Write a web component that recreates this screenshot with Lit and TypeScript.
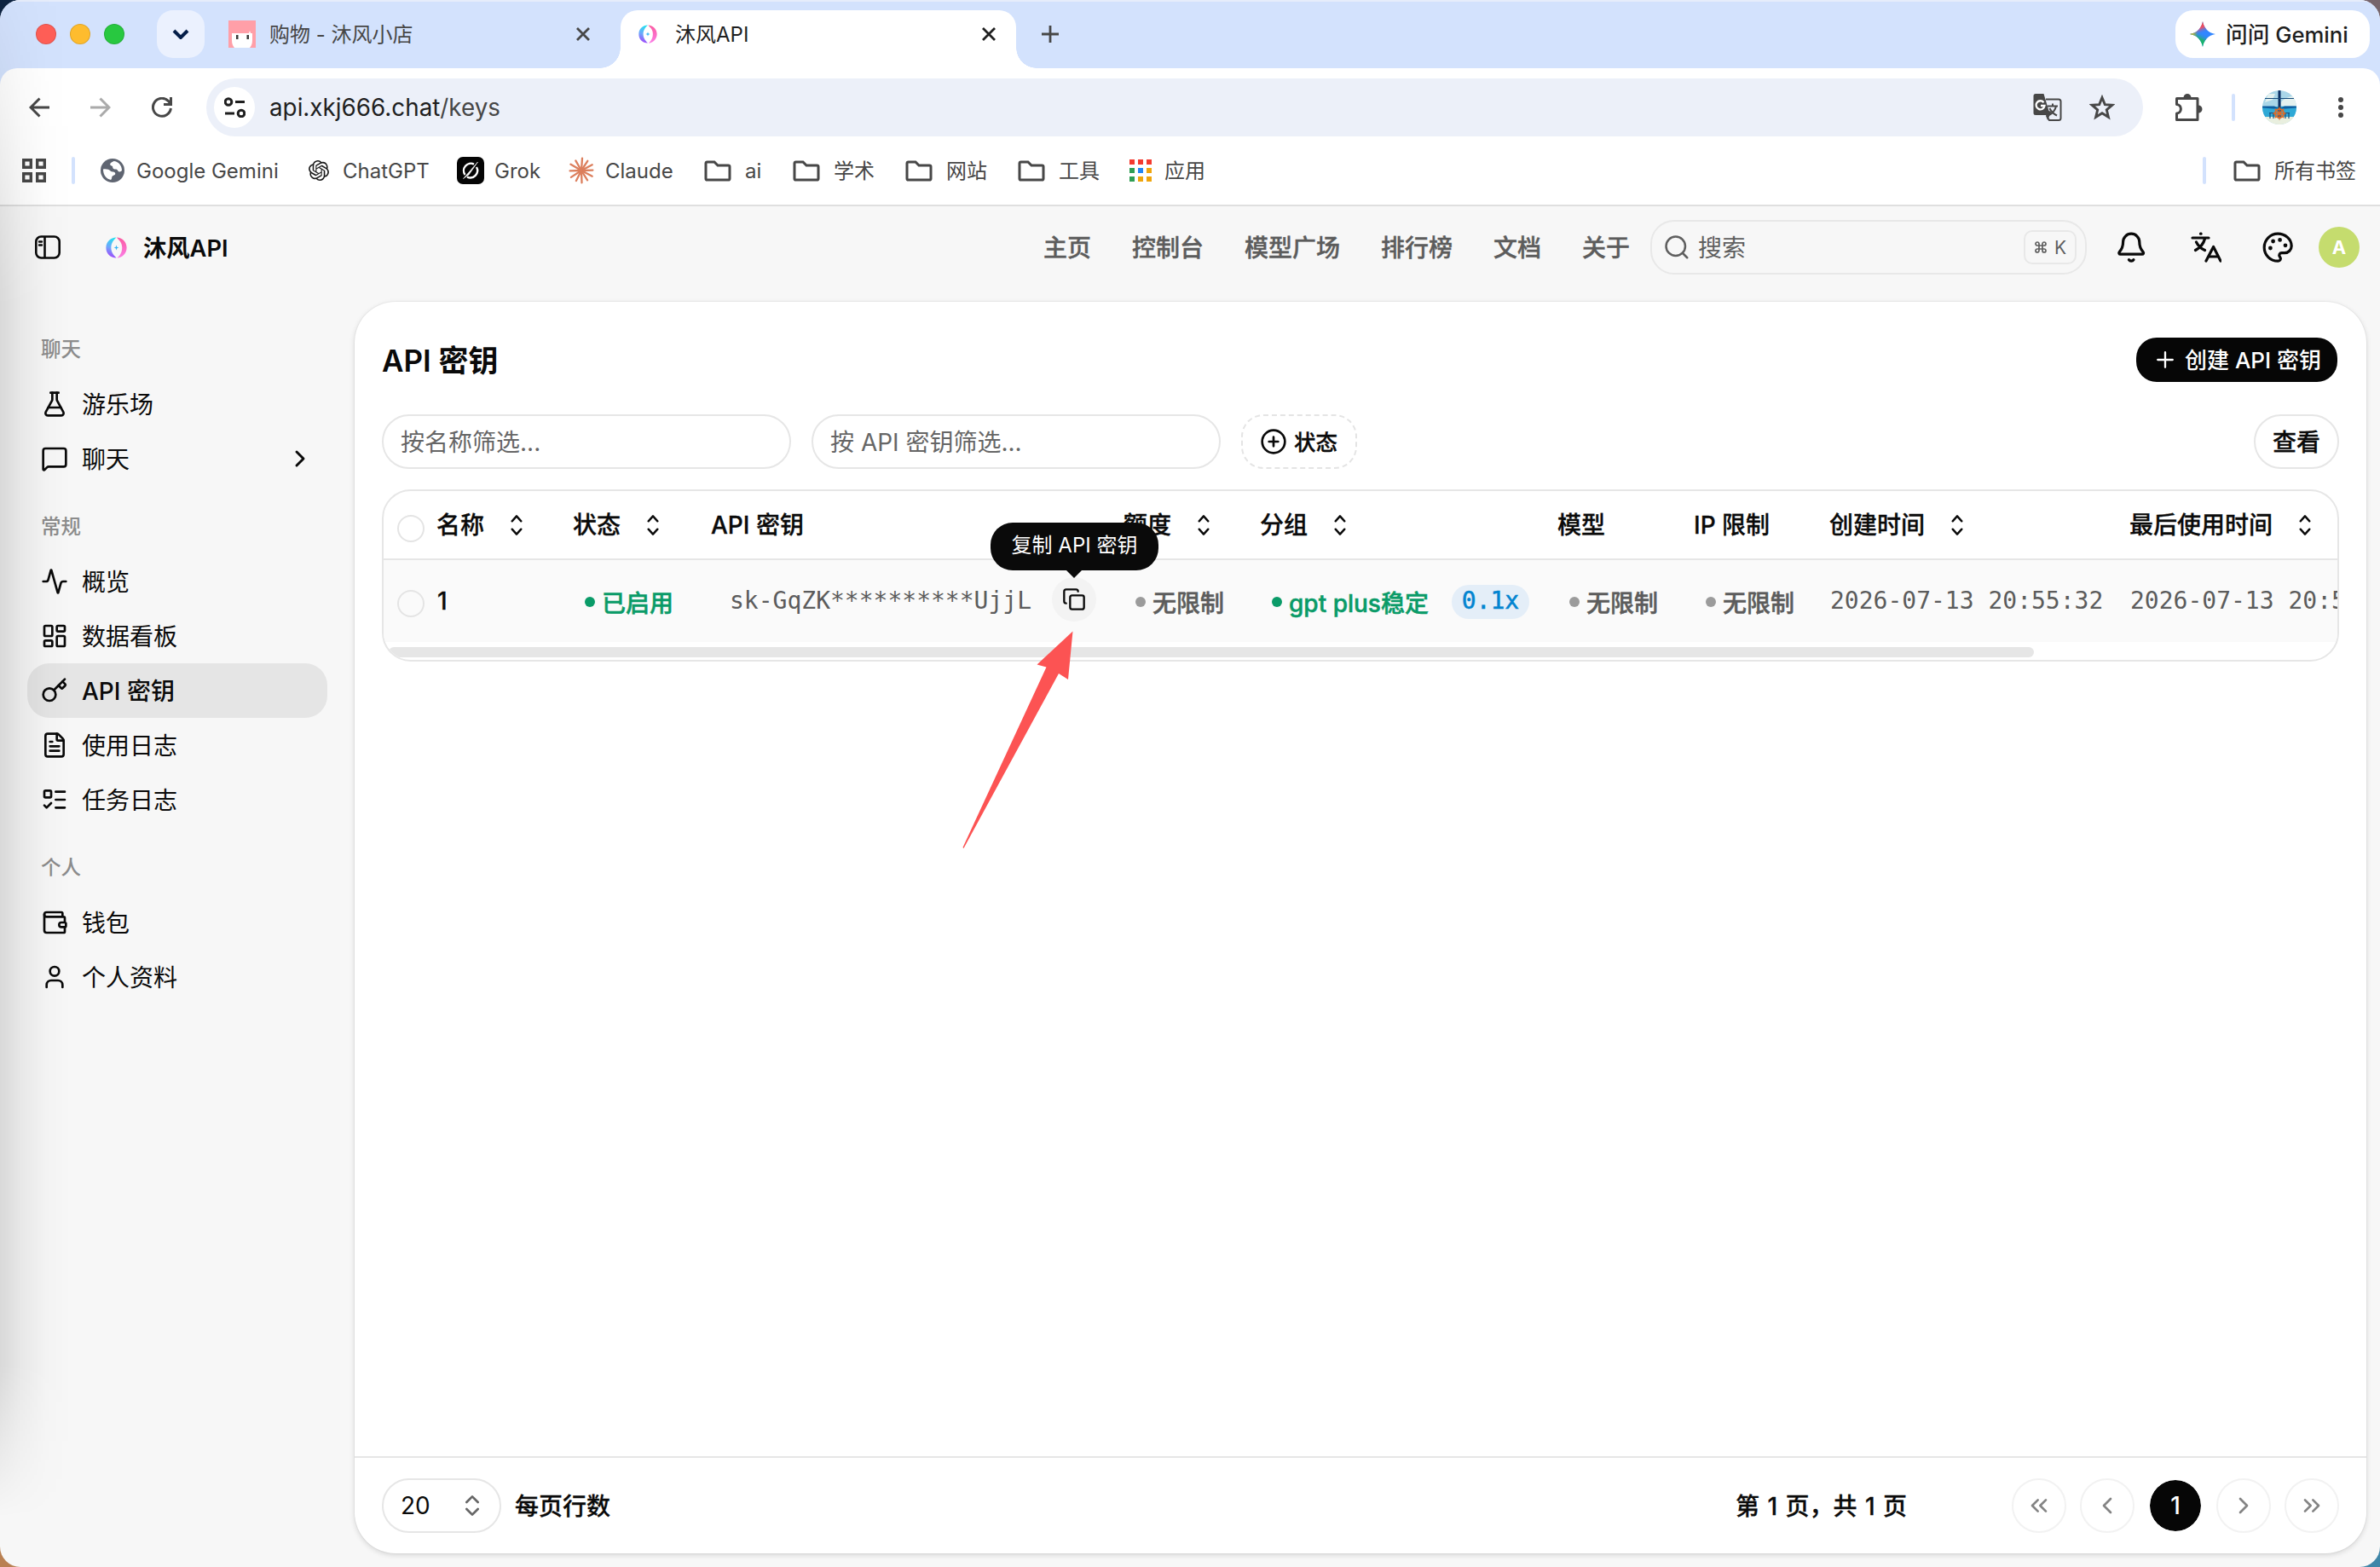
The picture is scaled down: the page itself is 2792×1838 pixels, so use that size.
import { LitElement, html, svg, css } from "lit";
import { customElement } from "lit/decorators.js";
import { classMap } from "lit/directives/class-map.js";
import { styleMap } from "lit/directives/style-map.js";

type Glyph = ReturnType<typeof svg>;

const icon = (size: number, body: Glyph, stroke = 2, cls = "") => html`<svg class="icon ${cls}" width=${size} height=${size} viewBox="0 0 24 24" fill="none" stroke="currentColor" stroke-width=${stroke} stroke-linecap="round" stroke-linejoin="round">${body}</svg>`;

const art = (w: number, h: number, body: Glyph) => html`<svg class="icon" width=${w} height=${h} viewBox="0 0 ${w} ${h}" fill="none">${body}</svg>`;

const G = {
  flask: svg`<path d="M14 2v6a2 2 0 0 0 .245.96l5.51 10.08A2 2 0 0 1 18 22H6a2 2 0 0 1-1.755-2.96l5.51-10.08A2 2 0 0 0 10 8V2"/><path d="M6.453 15h11.094"/><path d="M8.5 2h7"/>`,
  message: svg`<path d="M22 17a2 2 0 0 1-2 2H6.828a2 2 0 0 0-1.414.586l-2.202 2.202A.71.71 0 0 1 2 21.286V5a2 2 0 0 1 2-2h16a2 2 0 0 1 2 2z"/>`,
  activity: svg`<path d="M22 12h-2.48a2 2 0 0 0-1.93 1.46l-2.35 8.36a.25.25 0 0 1-.48 0L9.24 2.18a.25.25 0 0 0-.48 0l-2.35 8.36A2 2 0 0 1 4.49 12H2"/>`,
  dashboard: svg`<rect x="3" y="3" width="7" height="9" rx="1"/><rect x="14" y="3" width="7" height="5" rx="1"/><rect x="14" y="12" width="7" height="9" rx="1"/><rect x="3" y="16" width="7" height="5" rx="1"/>`,
  key: svg`<path d="m15.5 7.5 2.3 2.3a1 1 0 0 0 1.4 0l2.1-2.1a1 1 0 0 0 0-1.4L19 4"/><path d="m21 2-9.6 9.6"/><circle cx="7.5" cy="15.5" r="5.5"/>`,
  file: svg`<path d="M6 22a2 2 0 0 1-2-2V4a2 2 0 0 1 2-2h8a2.4 2.4 0 0 1 1.704.706l3.588 3.588A2.4 2.4 0 0 1 20 8v12a2 2 0 0 1-2 2z"/><path d="M14 2v5a1 1 0 0 0 1 1h5"/><path d="M10 9H8M16 13H8M16 17H8"/>`,
  todo: svg`<path d="M13 5h8M13 12h8M13 19h8"/><path d="m3 17 2 2 4-4"/><rect x="3" y="4" width="6" height="6" rx="1"/>`,
  wallet: svg`<path d="M19 7V4a1 1 0 0 0-1-1H5a2 2 0 0 0 0 4h15a1 1 0 0 1 1 1v4h-3a2 2 0 0 0 0 4h3a1 1 0 0 0 1-1v-2a1 1 0 0 0-1-1"/><path d="M3 5v14a2 2 0 0 0 2 2h15a1 1 0 0 0 1-1v-4"/>`,
  user: svg`<circle cx="12" cy="7" r="4"/><path d="M19 21v-2a4 4 0 0 0-4-4H9a4 4 0 0 0-4 4v2"/>`,
  bell: svg`<path d="M10.268 21a2 2 0 0 0 3.464 0"/><path d="M3.262 15.326A1 1 0 0 0 4 17h16a1 1 0 0 0 .74-1.673C19.41 13.956 18 12.499 18 8A6 6 0 0 0 6 8c0 4.499-1.411 5.956-2.738 7.326"/>`,
  palette: svg`<path d="M12 22a1 1 0 0 1 0-20 10 9 0 0 1 10 9 5 5 0 0 1-5 5h-2.25a1.75 1.75 0 0 0-1.4 2.8l.3.4a1.75 1.75 0 0 1-1.4 2.8z"/><g fill="currentColor" stroke-width="1.6"><circle cx="13.5" cy="6.5" r=".7"/><circle cx="17.5" cy="10.5" r=".7"/><circle cx="6.5" cy="12.5" r=".7"/><circle cx="8.5" cy="7.5" r=".7"/></g>`,
  search: svg`<circle cx="11" cy="11" r="9"/><path d="m21.8 21.8-4.2-4.2"/>`,
  right: svg`<path d="m9 18 6-6-6-6"/>`,
  left: svg`<path d="m15 18-6-6 6-6"/>`,
  first: svg`<path d="m11 17-5-5 5-5"/><path d="m18 17-5-5 5-5"/>`,
  last: svg`<path d="m6 17 5-5-5-5"/><path d="m13 17 5-5-5-5"/>`,
  updown: svg`<path d="m7 15 5 5 5-5"/><path d="m7 9 5-5 5 5"/>`,
  copy: svg`<rect x="8" y="8" width="14" height="14" rx="2"/><path d="M4 16c-1.1 0-2-.9-2-2V4c0-1.1.9-2 2-2h10c1.1 0 2 .9 2 2"/>`,
  pluscircle: svg`<circle cx="12" cy="12" r="10"/><path d="M8 12h8M12 8v8"/>`,
  plus: svg`<path d="M4.500 12h15M12 4.500v15"/>`,
};

const folder = art(32, 26, svg`<path d="M2 4.5A1.6 1.6 0 0 1 3.6 3H12l4 4h12.4A1.6 1.6 0 0 1 30 8.6v13.8a1.6 1.6 0 0 1-1.6 1.6H3.6A1.6 1.6 0 0 1 2 22.4z" stroke="#474747" stroke-width="3"/>`);

const brand = (s: number, id: string) => html`<svg class="icon" width=${s} height=${s} viewBox="0 0 26 26"><defs><linearGradient id="${id}a" x1="0.5" y1="0" x2="0.3" y2="1"><stop offset="0" stop-color="#27dff0"/><stop offset=".5" stop-color="#6fa6fb"/><stop offset="1" stop-color="#a63cfb"/></linearGradient><linearGradient id="${id}b" x1="0" y1="0" x2="0" y2="1"><stop offset="0" stop-color="#fb5ba0"/><stop offset="1" stop-color="#fb7ee6"/></linearGradient></defs><path fill="url(#${id}a)" d="M13 .6C6 .6.4 6 .4 13S5.500 25.400 13 25.400c-2-2-6.400-6-6.400-12.400S11 2.500 13 .6Z"/><path fill="url(#${id}b)" d="M13.400.6C20 .6 25.600 6 25.600 13S20 25.400 14 25.400c3-2.400 6-6.400 6-12.400S17 4.600 13.400.6Z"/><path fill="#39b6f5" d="m13 10 .8 2.200 2.200.8-2.200.8L13 16l-.8-2.200L10 13l2.200-.8z"/></svg>`;

const marks = {
  globe: art(28, 28, svg`<circle cx="14" cy="14" r="14" fill="#5f6571"/><path d="M3 12.500c3.500-.5 7 .2 8.600 2 1.600 1.700 5 .4 5.600 2.700.5 2-2 2.300-3.300 3.300-1.200 1-.3 3.500-1.900 4.400C6.500 24 3 19 3 12.500Z" fill="#fff"/><path d="M15.500 3c-1.200 1-4.500 1.700-4.300 4 .3 2 3.300 1 3 3.200-.2 1.700 1.800 2.300 3.500 2.300 2.600 0 2.300 2.700 4.300 3 1.200.1 2.200-.4 3-1.400C25 8 20.500 3.300 15.500 3Z" fill="#fff"/>`),
  openai: art(24, 24, svg`<path fill="#1a1a1a" d="M22.2819 9.8211a5.9847 5.9847 0 0 0-.5157-4.9108 6.0462 6.0462 0 0 0-6.5098-2.9A6.0651 6.0651 0 0 0 4.9807 4.1818a5.9847 5.9847 0 0 0-3.9977 2.9 6.0462 6.0462 0 0 0 .7427 7.0966 5.98 5.98 0 0 0 .511 4.9107 6.051 6.051 0 0 0 6.5146 2.9001A5.9847 5.9847 0 0 0 13.2599 24a6.0557 6.0557 0 0 0 5.7718-4.2058 5.9894 5.9894 0 0 0 3.9977-2.9001 6.0557 6.0557 0 0 0-.7475-7.0729zm-9.022 12.6081a4.4755 4.4755 0 0 1-2.8764-1.0408l.1419-.0804 4.7783-2.7582a.7948.7948 0 0 0 .3927-.6813v-6.7369l2.02 1.1686a.071.071 0 0 1 .038.052v5.5826a4.504 4.504 0 0 1-4.4945 4.4944zm-9.6607-4.1254a4.4708 4.4708 0 0 1-.5346-3.0137l.142.0852 4.783 2.7582a.7712.7712 0 0 0 .7806 0l5.8428-3.3685v2.3324a.0804.0804 0 0 1-.0332.0615L9.74 19.9502a4.4992 4.4992 0 0 1-6.1408-1.6464zM2.3408 7.8956a4.485 4.485 0 0 1 2.3655-1.9728V11.6a.7664.7664 0 0 0 .3879.6765l5.8144 3.3543-2.0201 1.1685a.0757.0757 0 0 1-.071 0l-4.8303-2.7865A4.504 4.504 0 0 1 2.3408 7.872zm16.5963 3.8558L13.1038 8.364 15.1192 7.2a.0757.0757 0 0 1 .071 0l4.8303 2.7913a4.4944 4.4944 0 0 1-.6765 8.1042v-5.6772a.79.79 0 0 0-.407-.667zm2.0107-3.0231l-.142-.0852-4.7735-2.7818a.7759.7759 0 0 0-.7854 0L9.409 9.2297V6.8974a.0662.0662 0 0 1 .0284-.0615l4.8303-2.7866a4.4992 4.4992 0 0 1 6.6802 4.66zM8.3065 12.863l-2.02-1.1638a.0804.0804 0 0 1-.038-.0567V6.0742a4.4992 4.4992 0 0 1 7.3757-3.4537l-.142.0805L8.704 5.459a.7948.7948 0 0 0-.3927.6813zm1.0976-2.3654l2.602-1.4998 2.6069 1.4998v2.9994l-2.5974 1.4997-2.6067-1.4997Z"/>`),
  grok: art(32, 32, svg`<rect width="32" height="32" rx="7" fill="#050505"/><path d="M20 8.600A8.400 8.400 0 0 0 9.500 21M12 23.600A8.400 8.400 0 0 0 23 12" stroke="#fff" stroke-width="2.400"/><path d="m7.500 25.500 17-19.500-10.500 15z" fill="#fff" stroke="#fff" stroke-width=".6"/>`),
  claude: art(32, 32, svg`<g stroke="#dc7f5d" stroke-width="2.300" stroke-linecap="round">${[4, 33, 62, 88, 118, 148, 178, 207, 237, 268, 300, 330].map((a, i) => svg`<path transform="rotate(${a} 16 16)" d="M16 16V${i % 2 ? 2.600 : 1.600}"/>`)}</g>`),
  folder,
  apps: art(28, 28, svg`${["#f43a2f", "#f43a2f", "#f43a2f", "#2f9e54", "#2286f5", "#f0a50c", "#2f9e54", "#f0a50c", "#f0a50c"].map((c, i) => svg`<rect x=${1 + (i % 3) * 10} y=${1 + Math.floor(i / 3) * 10} width="6" height="6" fill=${c}/>`)}`),
};

interface Mark { icon: keyof typeof marks; label: string; w: number; lead: number; gap: number; cjk?: boolean; }
const bookmarks: Mark[] = [
  { icon: "globe", label: "Google Gemini", w: 166, lead: 30, gap: 14 },
  { icon: "openai", label: "ChatGPT", w: 101, lead: 36, gap: 16 },
  { icon: "grok", label: "Grok", w: 54, lead: 33, gap: 12 },
  { icon: "claude", label: "Claude", w: 80, lead: 32, gap: 12 },
  { icon: "folder", label: "ai", w: 20, lead: 36, gap: 16 },
  { icon: "folder", label: "学术", w: 48, lead: 36, gap: 16, cjk: true },
  { icon: "folder", label: "网站", w: 48, lead: 36, gap: 16, cjk: true },
  { icon: "folder", label: "工具", w: 48, lead: 36, gap: 16, cjk: true },
  { icon: "apps", label: "应用", w: 48, lead: 34, gap: 14, cjk: true },
];

const groups: { label: string; items: { icon: Glyph; label: string; active?: boolean; more?: boolean }[] }[] = [
  { label: "聊天", items: [{ icon: G.flask, label: "游乐场" }, { icon: G.message, label: "聊天", more: true }] },
  {
    label: "常规",
    items: [
      { icon: G.activity, label: "概览" },
      { icon: G.dashboard, label: "数据看板" },
      { icon: G.key, label: "API 密钥", active: true },
      { icon: G.file, label: "使用日志" },
      { icon: G.todo, label: "任务日志" },
    ],
  },
  { label: "个人", items: [{ icon: G.wallet, label: "钱包" }, { icon: G.user, label: "个人资料" }] },
];

const columns: { label: string; sort?: boolean }[] = [
  { label: "名称", sort: true },
  { label: "状态", sort: true },
  { label: "API 密钥" },
  { label: "额度", sort: true },
  { label: "分组", sort: true },
  { label: "模型" },
  { label: "IP 限制" },
  { label: "创建时间", sort: true },
  { label: "最后使用时间", sort: true },
];

const base = css`
  * { box-sizing: border-box; }
  :host { display: block; font-family: Inter, "Noto Sans CJK SC", sans-serif; color: #0a0a0a; white-space: nowrap; }
  .icon { display: block; flex: none; }
  .cjk { padding-bottom: 3px; }
`;

@customElement("browser-chrome")
export class BrowserChrome extends LitElement {
  static styles = [base, css`
    :host { font-size: 24px; color: #474747; }
    .strip { display: flex; align-items: center; height: 80px; background: #d3e2fd; border-top: 2px solid #e6edfb; padding: 0 12px 2px 42px; }
    .lights { display: flex; gap: 16px; width: 142px; }
    .light { width: 24px; height: 24px; border-radius: 50%; border: 1px solid rgb(0 0 0 / 12%); }
    .red { background: #ff5f57; } .amber { background: #febc2e; } .green { background: #28c840; }
    .search { display: grid; place-items: center; width: 56px; height: 56px; border-radius: 19px; background: #ebf1fe; }
    .tab { display: flex; align-items: center; gap: 16px; width: 488px; height: 56px; padding: 0 35px 0 28px; }
    .grow { flex: 1; }
    .active { position: relative; align-self: flex-end; width: 464px; height: 68px; margin-bottom: -2px; padding: 0 23px 12px 21px; gap: 21px; background: #fff; border-radius: 20px 20px 0 0; color: #1f1f1f; }
    .active::before, .active::after { content: ""; position: absolute; bottom: 0; width: 24px; height: 24px; }
    .active::before { left: -24px; background: radial-gradient(circle at 0 0, transparent 23.500px, #fff 24px); }
    .active::after { right: -24px; background: radial-gradient(circle at 100% 0, transparent 23.500px, #fff 24px); }
    .new { margin-left: 30px; }
    .gemini { display: flex; align-items: center; gap: 12px; height: 56px; width: 228px; padding-left: 17px; border-radius: 21px; background: #fff; color: #1f1f1f; font-size: 25.700px; font-weight: 500; }
    .under { background: #d3e2fd; }
    .bars { background: #fff; border-radius: 20px 20px 0 0; }
    .toolbar { display: flex; align-items: center; height: 92px; padding: 0 33px 0 34px; }
    .back { width: 72px; } .fwd { width: 72px; } .reload { width: 64px; }
    .address { display: flex; align-items: center; width: 2272px; height: 68px; border-radius: 34px; background: #ecf0f9; padding: 0 33px 0 9px; color: #1f1f1f; font-size: 27.800px; }
    .site { display: grid; place-items: center; width: 48px; height: 48px; border-radius: 50%; background: #fff; margin-right: 17px; }
    .path { color: #474747; }
    .star { margin-left: 32px; }
    .puzzle { margin-left: 38px; }
    .rule { width: 4px; height: 32px; border-radius: 2px; background: #d3e2fd; }
    .toolbar .rule { margin-left: 34px; margin-right: 32px; }
    .dots { margin-left: 49px; }
    .marks { display: flex; align-items: center; height: 68px; padding: 0 28px 12px 26px; }
    .marks .rule { margin-left: 30px; }
    .mark { display: flex; align-items: center; }
    .hr { height: 2px; background: #dfdfdf; }
    .all { gap: 16px; margin-left: 32px; }
  `];
  render() {
    const x = (c: string) => art(18, 18, svg`<path d="m2 2 14 14M16 2 2 16" stroke=${c} stroke-width="2.800"/>`);
    const star = "M15 0c1.500 8 6.500 13.500 15 15-8.500 1.500-13.500 7-15 15C13.500 22 8.500 16.500 0 15 8.500 13.500 13.500 8 15 0Z";
    return html`
      <div class="strip">
        <div class="lights"><span class="light red"></span><span class="light amber"></span><span class="light green"></span></div>
        <div class="search">${art(20, 12, svg`<path d="m2 2 8 8 8-8" stroke="#041e49" stroke-width="4"/>`)}</div>
        <div class="tab">
          ${art(32, 32, svg`<rect width="32" height="32" fill="#ff9fa8"/><path d="M4 15h20l1-3 1 3h2v8q0 6-3 9H7q-3-3-3-9z" fill="#fff"/><path d="M9 17h2.500v5H9zM21.500 17H24v5h-2.500z" fill="#3a3a3a"/>`)}
          <span class="cjk">购物 - 沐风小店</span><span class="grow"></span>${x("#474747")}
        </div>
        <div class="tab active">${brand(22, "t")}<span class="cjk">沐风API</span><span class="grow"></span>${x("#1f1f1f")}</div>
        <div class="new">${art(20, 20, svg`<path d="M10 0v20M0 10h20" stroke="#474747" stroke-width="2.800"/>`)}</div>
        <span class="grow"></span>
        <div class="gemini">
          <svg class="icon" width="30" height="30" viewBox="0 0 30 30"><defs>
            <linearGradient id="g1" gradientUnits="userSpaceOnUse" x1="0" y1="15" x2="9" y2="15"><stop offset="0" stop-color="#ffc400"/><stop offset="1" stop-color="#fbbc04" stop-opacity="0"/></linearGradient>
            <linearGradient id="g2" gradientUnits="userSpaceOnUse" x1="13" y1="0" x2="18" y2="13"><stop offset="0" stop-color="#ff3f35"/><stop offset=".5" stop-color="#ec5066"/><stop offset="1" stop-color="#3186ff" stop-opacity="0"/></linearGradient>
            <linearGradient id="g3" gradientUnits="userSpaceOnUse" x1="12" y1="28" x2="18" y2="15"><stop offset="0" stop-color="#0ebc5f"/><stop offset=".45" stop-color="#20b070"/><stop offset="1" stop-color="#3186ff" stop-opacity="0"/></linearGradient>
          </defs><path fill="#3186ff" d=${star}/>${["g2", "g3", "g1"].map((g) => svg`<path fill="url(#${g})" d=${star}/>`)}</svg>
          <span class="cjk">问问 Gemini</span>
        </div>
      </div>
      <div class="under"><div class="bars">
        <div class="toolbar">
          <div class="back">${art(24, 24, svg`<path d="M24 12H3M12.500 1.500 2 12l10.500 10.500" stroke="#474747" stroke-width="3"/>`)}</div>
          <div class="fwd">${art(24, 24, svg`<path d="M0 12h21M11.500 1.500 22 12 11.500 22.500" stroke="#aaa" stroke-width="3"/>`)}</div>
          <div class="reload">${art(24, 24, svg`<path d="M22.400 13A10.500 10.500 0 1 1 19.600 4.600L22 7.500M22.500 0v8.500H14" stroke="#474747" stroke-width="3"/>`)}</div>
          <div class="address">
            <span class="site">${art(25, 24, svg`<g stroke="#1f1f1f" stroke-width="3"><circle cx="5" cy="5.500" r="3.800"/><path d="M13 5.500h11M1 19h11"/><circle cx="20" cy="19" r="3.800"/></g>`)}</span>
            <span>api.xkj666.chat<span class="path">/keys</span></span><span class="grow"></span>
            ${art(34, 34, svg`<path d="M15 7.500h15A2.500 2.500 0 0 1 32.500 10v19.500A2.500 2.500 0 0 1 30 32H19l-3-5" stroke="#474747" stroke-width="2"/><path d="M3 1h9.500l6 20 3 1-4.500 10-2-6H3a2.500 2.500 0 0 1-2.500-2.500v-20A2.500 2.500 0 0 1 3 1Z" fill="#474747"/><path d="M12.500 11.200A5 5 0 1 0 13.500 15H9" stroke="#fff" stroke-width="2.300"/><path d="M17 15.500h12M23 12.500v3M27 15.500c-.8 4-4 8-8 10.500M19.500 18c1.500 3.500 4.500 6.500 8.500 8.500" stroke="#474747" stroke-width="2"/>`)}
            <span class="star">${art(30, 30, svg`<path d="m15 3.500 3.300 8.100 8.700.6-6.700 5.600 2.100 8.500L15 21.700l-7.400 4.600 2.100-8.500L3 12.200l8.700-.6z" stroke="#474747" stroke-width="2.900"/>`)}</span>
          </div>
          <span class="puzzle">${art(32, 32, svg`<path d="M1.500 5.500h24.500v25H1.500v-7.500c6.500-.5 6.500-10 0-10.500z" stroke="#474747" stroke-width="3" stroke-linejoin="round"/><path d="M9.500 4.500a4.500 4.500 0 0 1 9 0zM27 13.500a4.500 4.500 0 0 1 0 9z" fill="#474747"/>`)}</span>
          <span class="rule"></span>
          <svg class="icon" width="40" height="40" viewBox="0 0 40 40"><defs><clipPath id="av"><circle cx="20" cy="20" r="20"/></clipPath></defs><g clip-path="url(#av)"><path fill="#a9d6e8" d="M0 0h40v40H0z"/><path fill="#e4f1ef" d="M7 4h8l-3 7-9 3zM22 14c3-5 10-6 18-9v13H22z"/><path fill="#2fa9d6" d="M0 19h40v12H0z"/><path fill="#0c5ea0" d="M0 18.500h14l6 3 6-3h14v2l-13 1H13L0 20.500z"/><path fill="#e9efdf" d="M0 31h40v9H0z"/><path stroke="#0a2f63" stroke-width="3" d="M20 0v33"/><path stroke="#164c7c" stroke-width="1.200" d="M3 9.500h34M9 26v7M13 27v6M27 27v6M31 26v7M8 26.500h7M26 26.500h6"/><circle cx="20" cy="27" r="5.200" fill="none" stroke="#df6c28" stroke-width="1.800"/><path stroke="#df6c28" stroke-width="1.300" d="M20 19.500v15M12.500 27h15M14.700 21.700l10.600 10.600M25.300 21.700 14.700 32.300"/></g></svg>
          <span class="dots">${art(6, 24, svg`<g fill="#474747"><circle cx="3" cy="3" r="3"/><circle cx="3" cy="12" r="3"/><circle cx="3" cy="21" r="3"/></g>`)}</span>
        </div>
        <div class="marks">
          ${art(28, 28, svg`<g stroke="#474747" stroke-width="3.400"><path d="M1.700 1.700h8.600v8.600H1.700zM17.700 1.700h8.600v8.600h-8.600zM1.700 17.700h8.600v8.600H1.700zM17.700 17.700h8.600v8.600h-8.600z"/></g>`)}
          <span class="rule"></span>
          ${bookmarks.map((b) => html`<div class="mark" style=${styleMap({ marginLeft: `${b.lead}px`, gap: `${b.gap}px` })}>${marks[b.icon]}<span class=${classMap({ cjk: !!b.cjk })} style=${styleMap({ width: `${b.w}px` })}>${b.label}</span></div>`)}
          <span class="grow"></span>
          <span class="rule"></span>
          <div class="mark all">${folder}<span class="cjk">所有书签</span></div>
        </div>
        <div class="hr"></div>
      </div></div>
    `;
  }
}

@customElement("app-topbar")
export class AppTopbar extends LitElement {
  static styles = [base, css`
    .bar { display: flex; align-items: center; height: 96px; padding: 0 24px 0 40px; font-size: 28px; }
    .logo { margin-left: 52px; }
    .name { width: 1075px; padding-left: 19px; font-weight: 600; font-size: 27.300px; }
    .nav { display: flex; gap: 48px; width: 712px; color: #5c5c5c; font-weight: 500; -webkit-text-stroke: .4px currentColor; }
    .search { display: flex; align-items: center; width: 512px; height: 64px; padding: 0 10px 0 14px; border: 2px solid #e8e8e8; border-radius: 28px; color: #5f5f5f; }
    .hint { flex: 1; padding-left: 10px; }
    .kbd { display: flex; align-items: center; justify-content: center; gap: 8px; width: 62px; height: 40px; border: 2px solid #e8e8e8; border-radius: 10px; font-size: 21px; }
    .bell { margin-left: 33px; } .lang { margin-left: 51px; } .theme { margin-left: 47px; }
    .avatar { display: grid; place-items: center; width: 48px; height: 48px; margin-left: auto; border-radius: 50%; background: #c5dc6e; color: #fff; font-weight: 700; font-size: 22px; }
  `];
  render() {
    return html`<div class="bar">
      ${art(32, 28, svg`<rect x="2.300" y="1.500" width="27.400" height="25" rx="6" stroke="#0a0a0a" stroke-width="2.600"/><path d="M12.500 1.500v25" stroke="#0a0a0a" stroke-width="2.600"/><path d="M6 7.500h3M6 11.500h3" stroke="#0a0a0a" stroke-width="2.400" stroke-linecap="round"/>`)}
      <span class="logo">${brand(25, "h")}</span>
      <span class="name cjk">沐风API</span>
      <nav class="nav cjk">${["主页", "控制台", "模型广场", "排行榜", "文档", "关于"].map((t) => html`<span>${t}</span>`)}</nav>
      <div class="search">${icon(30, G.search, 2)}<span class="hint cjk">搜索</span><span class="kbd">
        ${icon(16, svg`<path d="M15 6v12a3 3 0 1 0 3-3H6a3 3 0 1 0 3 3V6a3 3 0 1 0-3 3h12a3 3 0 1 0-3-3"/>`, 2.600)}<span>K</span></span></div>
      <span class="bell">${icon(38.4, G.bell)}</span>
      <span class="lang">${art(36, 36, svg`<g stroke="#0a0a0a" stroke-width="3.200" stroke-linecap="round" stroke-linejoin="round"><path d="M2 7h19M11.500 2.200h.6M16.500 8c-1.500 6-5.500 10.500-11 13.500M6.500 12c2 4 5.500 7.500 10 9.500M18 34l8.600-16.500L35 34M20.600 29h12"/></g>`)}</span>
      <span class="theme">${icon(38.4, G.palette)}</span>
      <span class="avatar">A</span>
    </div>`;
  }
}

@customElement("app-sidebar")
export class AppSidebar extends LitElement {
  static styles = [base, css`
    :host { width: 416px; padding: 32px; }
    .group { padding: 8px 0; }
    .label { height: 64px; padding-left: 16px; line-height: 64px; font-size: 23.500px; font-weight: 500; color: #8c8c8c; }
    .item { display: flex; align-items: center; gap: 16px; width: 352px; height: 64px; padding: 0 16px; border-radius: 26px; font-size: 28px; }
    .active { background: #e5e5e5; font-weight: 500; }
    .text { flex: 1; }
  `];
  render() {
    return html`${groups.map((g) => html`<div class="group"><div class="label">${g.label}</div>
      ${g.items.map((i) => html`<div class=${classMap({ item: true, active: !!i.active })}>${icon(32, i.icon)}<span class="text cjk">${i.label}</span>${i.more ? icon(32, G.right, 2.200) : ""}</div>`)}</div>`)}`;
  }
}

@customElement("keys-table")
export class KeysTable extends LitElement {
  static styles = [base, css`
    :host { position: relative; font-size: 28px; }
    .box { width: 2296px; height: 202px; overflow: hidden; border: 2px solid #e6e6e6; border-radius: 34px; }
    .row { display: grid; grid-template-columns: 46px 160px 162px 484px 160px 349px 160px 159px 352px 500px; align-items: center; }
    .head { height: 81px; border-bottom: 2px solid #e6e6e6; font-weight: 500; -webkit-text-stroke: .3px currentColor; }
    .body { height: 96px; background: #fafafa; color: #5c5c5c; }
    .cell { display: flex; align-items: center; padding-left: 16px; }
    .head .cell { gap: 22px; padding-bottom: 0; }
    .check { width: 32px; height: 32px; margin-left: 16px; border: 2px solid #e4e4e4; border-radius: 50%; background: #fff; }
    .head .check { margin-top: 9px; }
    .body .check { margin-top: 5px; background: none; }
    .dark { color: #0a0a0a; font-weight: 500; padding-left: 17px; padding-bottom: 1px; -webkit-text-stroke: .3px currentColor; }
    .pill { padding-left: 30px; gap: 8px; padding-top: 4px; font-weight: 500; -webkit-text-stroke: .5px currentColor; }
    .dot { width: 12px; height: 12px; margin-bottom: 2px; border-radius: 50%; background: #9b9b9b; }
    .green { color: #0a9b68; } .green .dot { background: #0a9b68; }
    .mono { font-family: "DejaVu Sans Mono", monospace; }
    .key { padding-left: 38px; padding-bottom: 4px; }
    .key .mono { width: 378px; padding-top: 2px; }
    .copy { display: grid; place-items: center; width: 52px; height: 52px; border-radius: 50%; background: #f3f3f3; color: #0a0a0a; }
    .ratio { width: 91px; height: 40px; margin-left: auto; margin-right: 17px; margin-bottom: 2px; border-radius: 20px; background: #e4eef8; color: #0284d0; text-align: center; line-height: 38px; }
    .plain { padding-left: 17px; padding-bottom: 2px; }
    .bar { width: 1930px; height: 12px; margin: 6px 0 0 6px; border-radius: 6px; background: #e6e6e6; }
    .tip { position: absolute; left: 714px; top: 39px; width: 197px; height: 56px; border-radius: 26px; background: #0a0a0a; color: #fff; font-size: 24px; line-height: 53px; text-align: center; }
    .tip::after { content: ""; position: absolute; left: 88px; bottom: -9px; border: 10px solid transparent; border-top-color: #0a0a0a; border-bottom: 0; }
  `];
  render() {
    const none = html`<span class="cell pill"><i class="dot"></i><span class="cjk">无限制</span></span>`;
    return html`<div class="box">
      <div class="row head"><span class="check"></span>${columns.map((c) => html`<span class="cell"><span class="cjk">${c.label}</span>${c.sort ? icon(32, svg`<path d="m8 15.500 4 4.500 4-4.500M8 8.500 12 4l4 4.500"/>`, 1.800) : ""}</span>`)}</div>
      <div class="row body">
        <span class="check"></span>
        <span class="cell dark">1</span>
        <span class="cell pill green"><i class="dot"></i><span class="cjk">已启用</span></span>
        <span class="cell key"><span class="mono">sk-GqZK**********UjjL</span><span class="copy">${icon(28, G.copy)}</span></span>
        ${none}
        <span class="cell pill green"><i class="dot"></i><span class="cjk">gpt plus稳定</span><span class="ratio mono">0.1x</span></span>
        ${none}${none}
        <span class="cell mono plain">2026-07-13 20:55:32</span>
        <span class="cell mono plain">2026-07-13 20:55:32</span>
      </div>
      <div class="bar"></div>
    </div>
    <div class="tip">复制 API 密钥</div>`;
  }
}

@customElement("keys-panel")
export class KeysPanel extends LitElement {
  static styles = [base, css`
    :host { display: flex; flex-direction: column; width: 2360px; height: 1468px; margin-top: 16px; border-radius: 48px; background: #fff; box-shadow: 0 0 0 1px rgb(0 0 0 / 3%), 0 2px 6px rgb(0 0 0 / 14%); font-size: 28px; }
    .title { display: flex; align-items: center; justify-content: space-between; height: 52px; margin: 42px 34px 0 32px; font-size: 35px; font-weight: 600; }
    .create { display: flex; align-items: center; gap: 9px; width: 236px; height: 52px; padding-left: 20px; border-radius: 24px; background: #060606; color: #fff; font-size: 26px; font-weight: 500; }
    .filters { display: flex; gap: 24px; height: 64px; margin: 38px 32px 24px; }
    .input { display: flex; align-items: center; width: 480px; padding-left: 20px; border: 2px solid #e6e6e6; border-radius: 32px; color: #666; }
    .status { display: flex; align-items: center; gap: 8px; width: 136px; padding-left: 20px; border: 2px dashed #e4e4e4; border-radius: 26px; font-size: 25.500px; font-weight: 500; -webkit-text-stroke: .3px currentColor; }
    .view { display: grid; place-items: center; width: 100px; margin-left: auto; border: 2px solid #e6e6e6; border-radius: 32px; font-weight: 500; -webkit-text-stroke: .3px currentColor; }
    .table { margin: 0 32px; }
    .footer { display: flex; align-items: center; height: 114px; margin-top: auto; padding: 0 32px; border-top: 2px solid #e6e6e6; font-weight: 500; }
    .size { display: flex; align-items: center; justify-content: space-between; width: 140px; height: 64px; padding: 0 16px 0 20px; margin-right: 16px; border: 2px solid #e6e6e6; border-radius: 32px; font-weight: 400; }
    .size .icon { color: #666; }
    .rows { flex: 1; -webkit-text-stroke: .3px currentColor; }
    .total { width: 324px; word-spacing: 2px; -webkit-text-stroke: .3px currentColor; }
    .pager { display: flex; gap: 16px; }
    .page { display: grid; place-items: center; width: 64px; height: 64px; border: 2px solid #f2f2f2; border-radius: 50%; color: #848484; }
    .current { border-color: #fff; background: #060606; background-clip: padding-box; color: #fff; }
  `];
  render() {
    return html`
      <div class="title"><span class="cjk">API 密钥</span><span class="create">${icon(28, G.plus, 2)}<span class="cjk">创建 API 密钥</span></span></div>
      <div class="filters">
        <div class="input"><span class="cjk">按名称筛选...</span></div><div class="input"><span class="cjk">按 API 密钥筛选...</span></div>
        <div class="status">${icon(32, G.pluscircle)}<span class="cjk">状态</span></div>
        <div class="view"><span class="cjk">查看</span></div>
      </div>
      <keys-table class="table"></keys-table>
      <div class="footer">
        <div class="size"><span>20</span>${icon(32, G.updown)}</div><span class="rows cjk">每页行数</span>
        <span class="total cjk">第 1 页，共 1 页</span>
        <div class="pager">
          <span class="page">${icon(32, G.first)}</span><span class="page">${icon(32, G.left)}</span>
          <span class="page current">1</span>
          <span class="page">${icon(32, G.right)}</span><span class="page">${icon(32, G.last)}</span>
        </div>
      </div>`;
  }
}

@customElement("app-root")
export class AppRoot extends LitElement {
  static styles = [base, css`
    :host { width: 2792px; height: 1838px; overflow: hidden; background: conic-gradient(#76656c 90deg, #3f86a8 90deg 180deg, #b98052 180deg 270deg, #0d2340 270deg); }
    .window { position: relative; height: 1838px; overflow: hidden; border-radius: 24px; background: #f7f7f7; }
    .app { display: flex; }
    .shade { position: absolute; left: 0; top: 0; width: 84px; height: 1780px; background: linear-gradient(90deg, rgb(0 0 0 / 12%), rgb(0 0 0 / 6%) 30%, rgb(0 0 0 / 1.500%) 65%, transparent); mask-image: linear-gradient(rgb(0 0 0 / 15%), #000 360px 1600px, transparent); }
    .pointer { position: absolute; left: 1120px; top: 730px; }
  `];
  render() {
    return html`<div class="window">
      <browser-chrome></browser-chrome>
      <app-topbar></app-topbar>
      <div class="app"><app-sidebar></app-sidebar><div class="main"><keys-panel></keys-panel></div></div>
      <div class="shade"></div>
      <svg class="pointer" width="150" height="270" viewBox="0 0 150 270"><path d="M138.500 10.500 133 67l-11-7L10.500 265l-1-1L107.500 52.500 96.500 49.500z" fill="#fc5353"/></svg>
    </div>`;
  }
}
